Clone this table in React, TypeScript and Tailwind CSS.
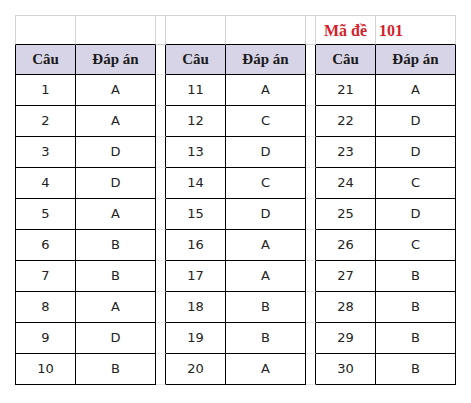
import React from 'react';

const answers = ['A', 'A', 'D', 'D', 'A', 'B', 'B', 'A', 'D', 'B', 'A', 'C', 'D', 'C', 'D', 'A', 'A', 'B', 'B', 'A', 'A', 'D', 'D', 'C', 'D', 'C', 'B', 'B', 'B', 'B'];

const gray = 'border-[#d4d4d4]';

export default function App() {
  const rows = Array.from({ length: 10 }, (_, i) => i);

  // one row of the sheet: 3 answer tables side by side, gap columns between
  const gapCell = (last: boolean, key: string) => (
    <div key={key} className={`border-b border-r ${last ? 'border-b-[#e6e6e6]' : 'border-b-[#ececec]'} border-r-black`} />
  );

  return (
    <div className="w-[471px] h-[403px] bg-white pl-[15px] pt-[15px]" style={{ fontFamily: '"DejaVu Sans", sans-serif' }}>
      <div className="grid grid-cols-[61px_80px_10px_60px_80px_10px_60px_80px] grid-rows-[30px_30px_repeat(10,31px)] w-max">
        {/* top empty row */}
        <div className={`border-l border-t border-r border-b ${gray} border-b-black`} />
        <div className={`border-t border-r border-b ${gray} border-b-black`} />
        <div className={`border-t border-r border-b ${gray}`} />
        <div className={`border-t border-r border-b ${gray} border-b-black`} />
        <div className={`border-t border-r border-b ${gray} border-b-black`} />
        <div className={`border-t border-r border-b ${gray}`} />
        <div className={`border-t border-r border-b ${gray} border-b-black flex items-center justify-center`}>
          <span className="text-[#d71f2b] font-bold text-[16px] pt-[1px]" style={{ fontFamily: '"Liberation Serif", serif' }}>Mã đề</span>
        </div>
        <div className={`border-t border-r border-b ${gray} border-b-black flex items-center pl-[3px]`}>
          <span className="text-[#d71f2b] font-bold text-[16px] pt-[1px]" style={{ fontFamily: '"Liberation Serif", serif' }}>101</span>
        </div>

        {/* header row */}
        {[0, 1, 2].map((t) => (
          <React.Fragment key={'h' + t}>
            <div className={`${t === 0 ? 'border-l' : ''} border-r border-b border-black bg-[#d8d4e8] flex items-center justify-center text-[15px] font-bold text-[#1a1a1a]`} style={{ fontFamily: '"Liberation Serif", serif' }}>
              Câu
            </div>
            <div className="border-r border-b border-black bg-[#d8d4e8] flex items-center justify-center text-[15px] font-bold text-[#1a1a1a]" style={{ fontFamily: '"Liberation Serif", serif' }}>
              Đáp án
            </div>
            {t < 2 && gapCell(false, 'hg' + t)}
          </React.Fragment>
        ))}

        {/* answer rows */}
        {rows.map((r) =>
          [0, 1, 2].map((t) => {
            const n = t * 10 + r + 1;
            return (
              <React.Fragment key={`r${r}-${t}`}>
                <div className={`${t === 0 ? 'border-l' : ''} border-r border-b border-black flex items-center justify-center text-[13px] text-[#222]`}>
                  {n}
                </div>
                <div className="border-r border-b border-black flex items-center justify-center text-[13px] text-[#222]">
                  {answers[n - 1]}
                </div>
                {t < 2 && gapCell(r === 9, `g${r}-${t}`)}
              </React.Fragment>
            );
          })
        )}
      </div>
    </div>
  );
}
